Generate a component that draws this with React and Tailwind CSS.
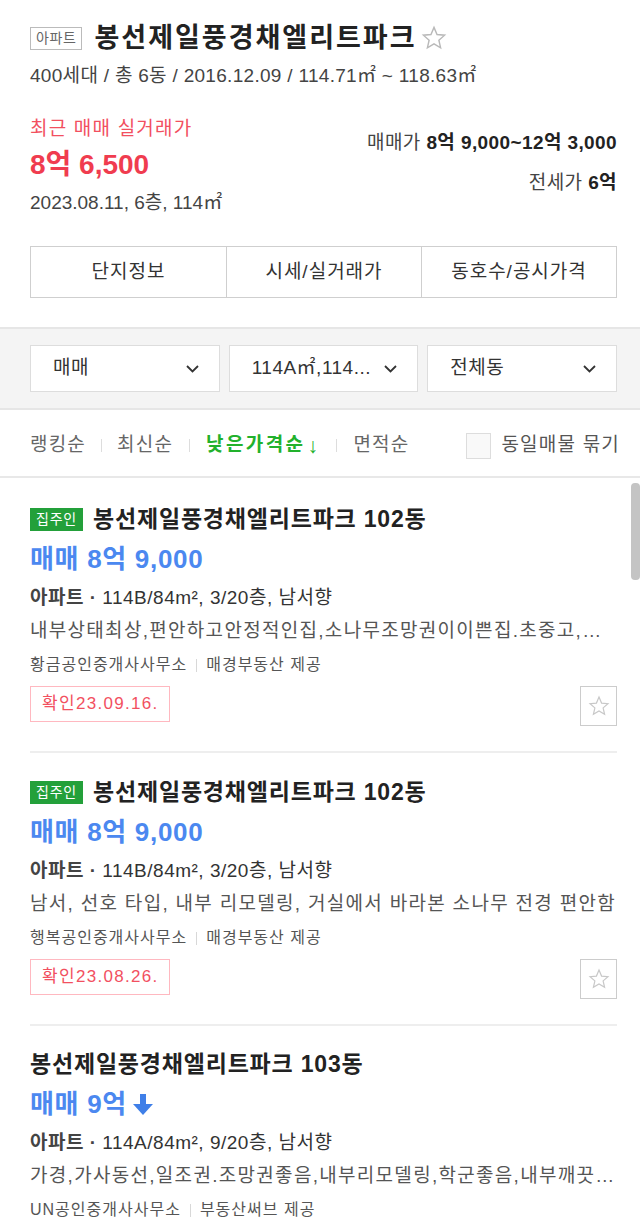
import React from 'react';

const StarOutline = ({ size = 24, color = '#bbb' }) => (
  <svg width={size} height={size} viewBox="0 0 24 24" fill="none">
    <polygon
      points="12,2.2 14.8,8.8 21.8,9.4 16.5,14.1 18.1,21.1 12,17.4 5.9,21.1 7.5,14.1 2.2,9.4 9.2,8.8"
      stroke={color}
      strokeWidth="1.3"
      strokeLinejoin="miter"
    />
  </svg>
);

const Chevron = () => (
  <svg width="13" height="8" viewBox="0 0 13 8" fill="none">
    <polyline points="1,1 6.5,6.5 12,1" stroke="#333" strokeWidth="1.8" />
  </svg>
);

const DownArrow = () => (
  <svg width="22" height="24" viewBox="0 0 22 24" fill="#3f7fe8">
    <rect x="8" y="2" width="6" height="12" />
    <polygon points="1,12 21,12 11,23" />
  </svg>
);

const listings = [
  {
    owner: true,
    title: '봉선제일풍경채엘리트파크 102동',
    price: '매매 8억 9,000',
    spec: '114B/84m², 3/20층, 남서향',
    desc: '내부상태최상,편안하고안정적인집,소나무조망권이이쁜집.초중고,학원가인접,교통편리',
    agency: '황금공인중개사사무소',
    source: '매경부동산 제공',
    confirmed: '확인23.09.16.',
  },
  {
    owner: true,
    title: '봉선제일풍경채엘리트파크 102동',
    price: '매매 8억 9,000',
    spec: '114B/84m², 3/20층, 남서향',
    desc: '남서, 선호 타입, 내부 리모델링, 거실에서 바라본 소나무 전경 편안함',
    agency: '행복공인중개사사무소',
    source: '매경부동산 제공',
    confirmed: '확인23.08.26.',
  },
  {
    owner: false,
    title: '봉선제일풍경채엘리트파크 103동',
    price: '매매 9억',
    down: true,
    spec: '114A/84m², 9/20층, 남서향',
    desc: '가경,가사동선,일조권.조망권좋음,내부리모델링,학군좋음,내부깨끗함,즉시입주가능',
    agency: 'UN공인중개사사무소',
    source: '부동산써브 제공',
    confirmed: '확인23.09.10.',
  },
];

function Listing({ item, first, last }) {
  const top = first ? 'pt-[28px]' : item.owner ? 'pt-[26px]' : 'pt-[25px]';
  return (
    <div className={`${top} pb-[25px] ${last ? '' : 'border-b-2 border-[#eeeeee]'}`}>
      <div className="flex items-center h-[26px]">
        {item.owner && (
          <span className="mr-[10px] h-[23px] px-[6px] bg-[#23a03a] text-white text-[14px] tracking-[0.8px] leading-[23px]">
            집주인
          </span>
        )}
        <span className="text-[23px] font-bold text-[#222] leading-[26px] tracking-[0.8px]">{item.title}</span>
      </div>
      <div className="mt-[11px] flex items-center h-[32px] text-[26px] font-bold text-[#4b88f0] leading-[32px] tracking-[0.7px]">
        {item.price}
        {item.down && (
          <span className="ml-[5px] flex items-center">
            <DownArrow />
          </span>
        )}
      </div>
      <div className="mt-[9px] text-[19px] leading-[28px] text-[#333] tracking-[0.5px]">
        <span className="font-bold text-[#444]">아파트 · </span>
        {item.spec}
      </div>
      <div className="mt-[5px] text-[19px] leading-[28px] text-[#555] tracking-[1.3px] truncate">{item.desc}</div>
      <div className="mt-[7px] flex items-center text-[16px] leading-[26px] text-[#555] tracking-[1px]">
        <span>{item.agency}</span>
        <span className="mx-[9px] w-px h-[13px] bg-[#d8d8d8]" />
        <span>{item.source}</span>
      </div>
      <div className="mt-[8px] flex items-start justify-between">
        <span className="h-[36px] px-[11px] border border-[#ffb8c0] text-[#f2505f] text-[17px] leading-[34px] tracking-[1.3px]">
          {item.confirmed}
        </span>
        <button className="w-[37px] h-[40px] border border-[#cccccc] flex items-center justify-center">
          <StarOutline size={22} color="#c8c8c8" />
        </button>
      </div>
    </div>
  );
}

export default function App() {
  return (
    <div className="w-[640px] h-[1217px] overflow-hidden bg-white font-['Liberation_Sans','Noto_Sans_CJK_KR',sans-serif] text-[#333]">
      {/* Complex header */}
      <section className="pl-[30px] pr-[23px] pt-[22px]">
        <div className="flex items-center h-[32px]">
          <span className="h-[23px] px-[5px] border border-[#bbbbbb] text-[14px] leading-[21px] text-[#666] tracking-[0.6px]">아파트</span>
          <h1 className="ml-[12px] text-[27px] font-bold text-[#222] leading-[32px] tracking-[2px]">
            봉선제일풍경채엘리트파크
          </h1>
          <span className="ml-[4px] flex items-center">
            <StarOutline size={26} color="#b9b9b9" />
          </span>
        </div>
        <p className="mt-[10px] text-[19px] leading-[24px] text-[#444] tracking-[0.3px]">
          400세대 / 총 6동 / 2016.12.09 / 114.71㎡ ~ 118.63㎡
        </p>

        <div className="mt-[28px] flex justify-between">
          <div>
            <p className="text-[19px] leading-[26px] text-[#f2505f] tracking-[1.2px]">최근 매매 실거래가</p>
            <p className="mt-[6px] text-[28px] font-bold leading-[34px] text-[#f03c4f]">8억 6,500</p>
            <p className="mt-[8px] text-[19px] leading-[26px] text-[#444]">2023.08.11, 6층, 114㎡</p>
          </div>
          <div className="pt-[14px] flex flex-col items-end">
            <p className="text-[19px] leading-[26px] text-[#444] tracking-[0.4px]">
              매매가 <span className="font-bold text-[#222]">8억 9,000~12억 3,000</span>
            </p>
            <p className="mt-[14px] text-[19px] leading-[26px] text-[#444] tracking-[0.4px]">
              전세가 <span className="font-bold text-[#222]">6억</span>
            </p>
          </div>
        </div>

        <div className="mt-[30px] grid grid-cols-3 border border-[#cfcfcf] h-[52px] text-[19px] text-[#333] tracking-[1px]">
          <div className="flex items-center justify-center">단지정보</div>
          <div className="flex items-center justify-center border-l border-[#cfcfcf]">시세/실거래가</div>
          <div className="flex items-center justify-center border-l border-[#cfcfcf]">동호수/공시가격</div>
        </div>
      </section>

      {/* Filters */}
      <div className="mt-[29px] border-y-2 border-[#e6e6e6] bg-[#f4f4f4] pl-[30px] pr-[23px] py-[16px] grid grid-cols-3 gap-[9px]">
        {['매매', '114A㎡,114...', '전체동'].map((label) => (
          <div
            key={label}
            className="h-[47px] bg-white border border-[#dddddd] pl-[22px] pr-[20px] flex items-center justify-between text-[19px] text-[#333] tracking-[0.5px]"
          >
            <span>{label}</span>
            <Chevron />
          </div>
        ))}
      </div>

      {/* Sort */}
      <div className="h-[68px] pt-[5px] border-b-2 border-[#e8e8e8] pl-[30px] pr-[20px] flex items-center justify-between text-[19px] tracking-[1.2px]">
        <div className="flex items-center text-[#666]">
          <span>랭킹순</span>
          <span className="mx-[15px] w-px h-[13px] bg-[#dddddd]" />
          <span>최신순</span>
          <span className="mx-[16px] w-px h-[13px] bg-[#dddddd]" />
          <span className="font-bold text-[#22b12c] tracking-[2.4px] flex items-center">
            낮은가격순<span className="ml-[2px] font-normal text-[21px]">↓</span>
          </span>
          <span className="mx-[16px] w-px h-[13px] bg-[#dddddd]" />
          <span>면적순</span>
        </div>
        <label className="flex items-center text-[#555]">
          <span className="w-[25px] h-[26px] border border-[#dddddd] bg-[#f9f9f9]" />
          <span className="ml-[10px]">동일매물 묶기</span>
        </label>
      </div>

      {/* Listings */}
      <div className="relative">
        <div className="pl-[30px] pr-[23px]">
          {listings.map((item, i) => (
            <Listing key={i} item={item} first={i === 0} last={i === listings.length - 1} />
          ))}
        </div>
        <div className="absolute top-[5px] right-0 w-[9px] h-[97px] rounded-[4px] bg-[#c4c4c4]" />
      </div>
    </div>
  );
}
